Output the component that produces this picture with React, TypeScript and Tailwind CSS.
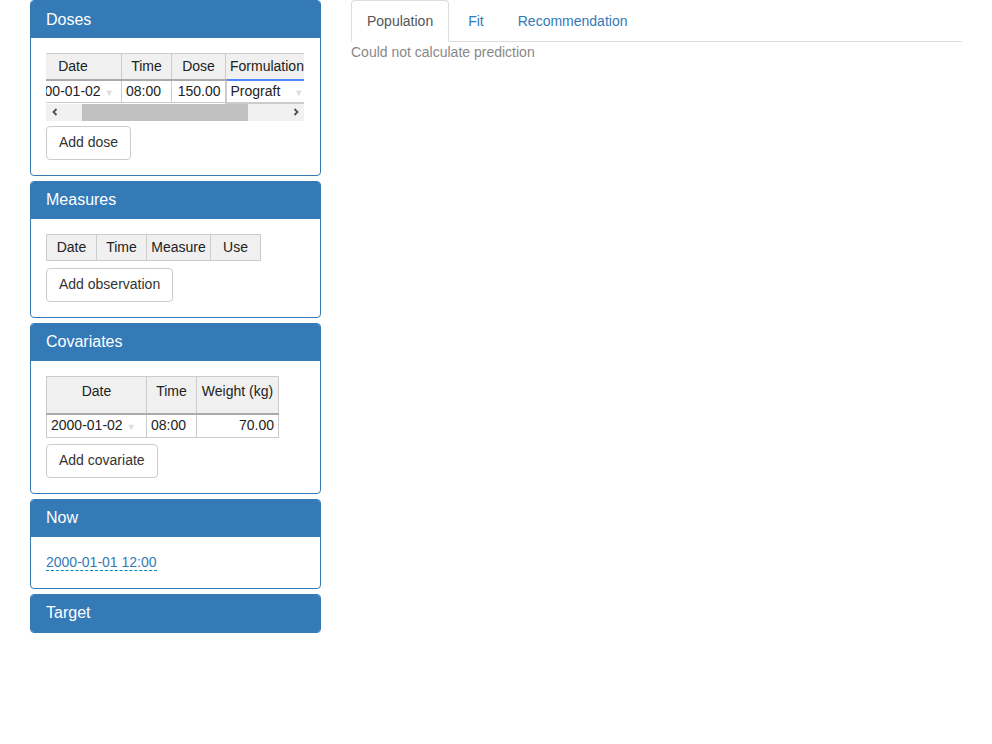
import React from 'react';

const font = { fontFamily: '"Liberation Sans", Arial, Helvetica, sans-serif' };

const Panel: React.FC<{ title: string; children?: React.ReactNode }> = ({ title, children }) => {
  return (
    <div className="border border-[#337ab7] rounded-[4px] bg-white overflow-hidden">
      <div className="h-[37px] bg-[#337ab7] text-white text-[16px] px-[15px] flex items-center">{title}</div>
      {children && <div className="p-[15px]">{children}</div>}
    </div>
  );
};

const Btn: React.FC<{ label: string }> = ({ label }) => (
  <button className="h-[34px] px-3 border border-[#ccc] rounded-[4px] bg-white text-[14px] text-[#333]">{label}</button>
);

const Arrow = () => <span className="text-[#ddd] text-[9px] ml-[4px]">▼</span>;

const th = 'bg-[#f0f0f0] border border-[#ccc] text-[14px] text-[#222] font-normal p-0 text-center';
const td = 'border border-[#ccc] text-[14px] text-[#222] px-[4px] h-[23px] bg-white whitespace-nowrap';

const DosesTable = () => (
  <div>
    <div className="w-[258px] overflow-hidden">
      <table className="border-collapse table-fixed w-[284px] -ml-[22px]">
        <colgroup>
          <col className="w-[97px]" />
          <col className="w-[50px]" />
          <col className="w-[54px]" />
          <col className="w-[83px]" />
        </colgroup>
        <thead>
          <tr className="h-[26px]">
            <th className={`${th} border-b-2 border-b-[#aaa]`}>Date</th>
            <th className={`${th} border-b-2 border-b-[#aaa]`}>Time</th>
            <th className={`${th} border-b-2 border-b-[#aaa]`}>Dose</th>
            <th className={`${th} bg-[#dcdcdc] border-b-2 border-b-[#4b89ff] text-left pl-[4px]`}>Formulation</th>
          </tr>
        </thead>
        <tbody>
          <tr>
            <td className={td}>2000-01-02<Arrow /></td>
            <td className={td}>08:00</td>
            <td className={`${td} text-right`}>150.00</td>
            <td className={`${td} border-2 border-[#4b89ff]`}>
              Prograft<span className="text-[#ddd] text-[9px] ml-[14px]">▼</span>
            </td>
          </tr>
        </tbody>
      </table>
    </div>
    <div className="w-[258px] h-[17px] bg-[#f1f1f1] flex items-center">
      <div className="w-[17px] h-[17px] flex items-center justify-center">
        <svg width="8" height="8" viewBox="0 0 8 8"><path d="M5.5 1 L2.5 4 L5.5 7" stroke="#505050" strokeWidth="1.8" fill="none" /></svg>
      </div>
      <div className="w-[19px]" />
      <div className="w-[166px] h-[17px] bg-[#c1c1c1]" />
      <div className="flex-1" />
      <div className="w-[17px] h-[17px] flex items-center justify-center">
        <svg width="8" height="8" viewBox="0 0 8 8"><path d="M2.5 1 L5.5 4 L2.5 7" stroke="#505050" strokeWidth="1.8" fill="none" /></svg>
      </div>
    </div>
  </div>
);

const MeasuresTable = () => (
  <table className="border-collapse table-fixed">
    <colgroup>
      <col className="w-[50px]" />
      <col className="w-[50px]" />
      <col className="w-[64px]" />
      <col className="w-[50px]" />
    </colgroup>
    <thead>
      <tr className="h-[26px]">
        <th className={th}>Date</th>
        <th className={th}>Time</th>
        <th className={th}>Measure</th>
        <th className={th}>Use</th>
      </tr>
    </thead>
  </table>
);

const CovariatesTable = () => (
  <table className="border-collapse table-fixed">
    <colgroup>
      <col className="w-[100px]" />
      <col className="w-[50px]" />
      <col className="w-[82px]" />
    </colgroup>
    <thead>
      <tr className="h-[38px]">
        <th className={`${th} align-top pt-[4px] border-b-2 border-b-[#aaa]`}>Date</th>
        <th className={`${th} align-top pt-[4px] border-b-2 border-b-[#aaa]`}>Time</th>
        <th className={`${th} align-top pt-[4px] border-b-2 border-b-[#aaa]`}>Weight (kg)</th>
      </tr>
    </thead>
    <tbody>
      <tr>
        <td className={td}>2000-01-02<Arrow /></td>
        <td className={td}>08:00</td>
        <td className={`${td} text-right`}>70.00</td>
      </tr>
    </tbody>
  </table>
);

export default function App() {
  return (
    <div style={font} className="w-[992px] h-[744px] bg-white text-[14px] text-[#333] flex gap-[30px] px-[30px]">
      <div className="w-[291px] flex flex-col gap-[5px]">
        <Panel title="Doses">
          <DosesTable />
          <div className="mt-[5px]"><Btn label="Add dose" /></div>
        </Panel>
        <Panel title="Measures">
          <MeasuresTable />
          <div className="mt-[7px]"><Btn label="Add observation" /></div>
        </Panel>
        <Panel title="Covariates">
          <CovariatesTable />
          <div className="mt-[6px]"><Btn label="Add covariate" /></div>
        </Panel>
        <Panel title="Now">
          <a className="text-[#337ab7] border-b border-dashed border-[#0088cc] leading-[20px]">2000-01-01 12:00</a>
        </Panel>
        <Panel title="Target" />
      </div>
      <div className="flex-1">
        <div className="flex border-b border-[#ddd] h-[42px]">
          <div className="h-[42px] px-[15px] flex items-center border border-[#ddd] border-b-white rounded-t-[4px] bg-white text-[#555] mr-[4px]">Population</div>
          <div className="h-[42px] px-[15px] flex items-center text-[#337ab7] mr-[4px]">Fit</div>
          <div className="h-[42px] px-[15px] flex items-center text-[#337ab7]">Recommendation</div>
        </div>
        <div className="text-[#888] leading-[20px]">Could not calculate prediction</div>
      </div>
    </div>
  );
}
